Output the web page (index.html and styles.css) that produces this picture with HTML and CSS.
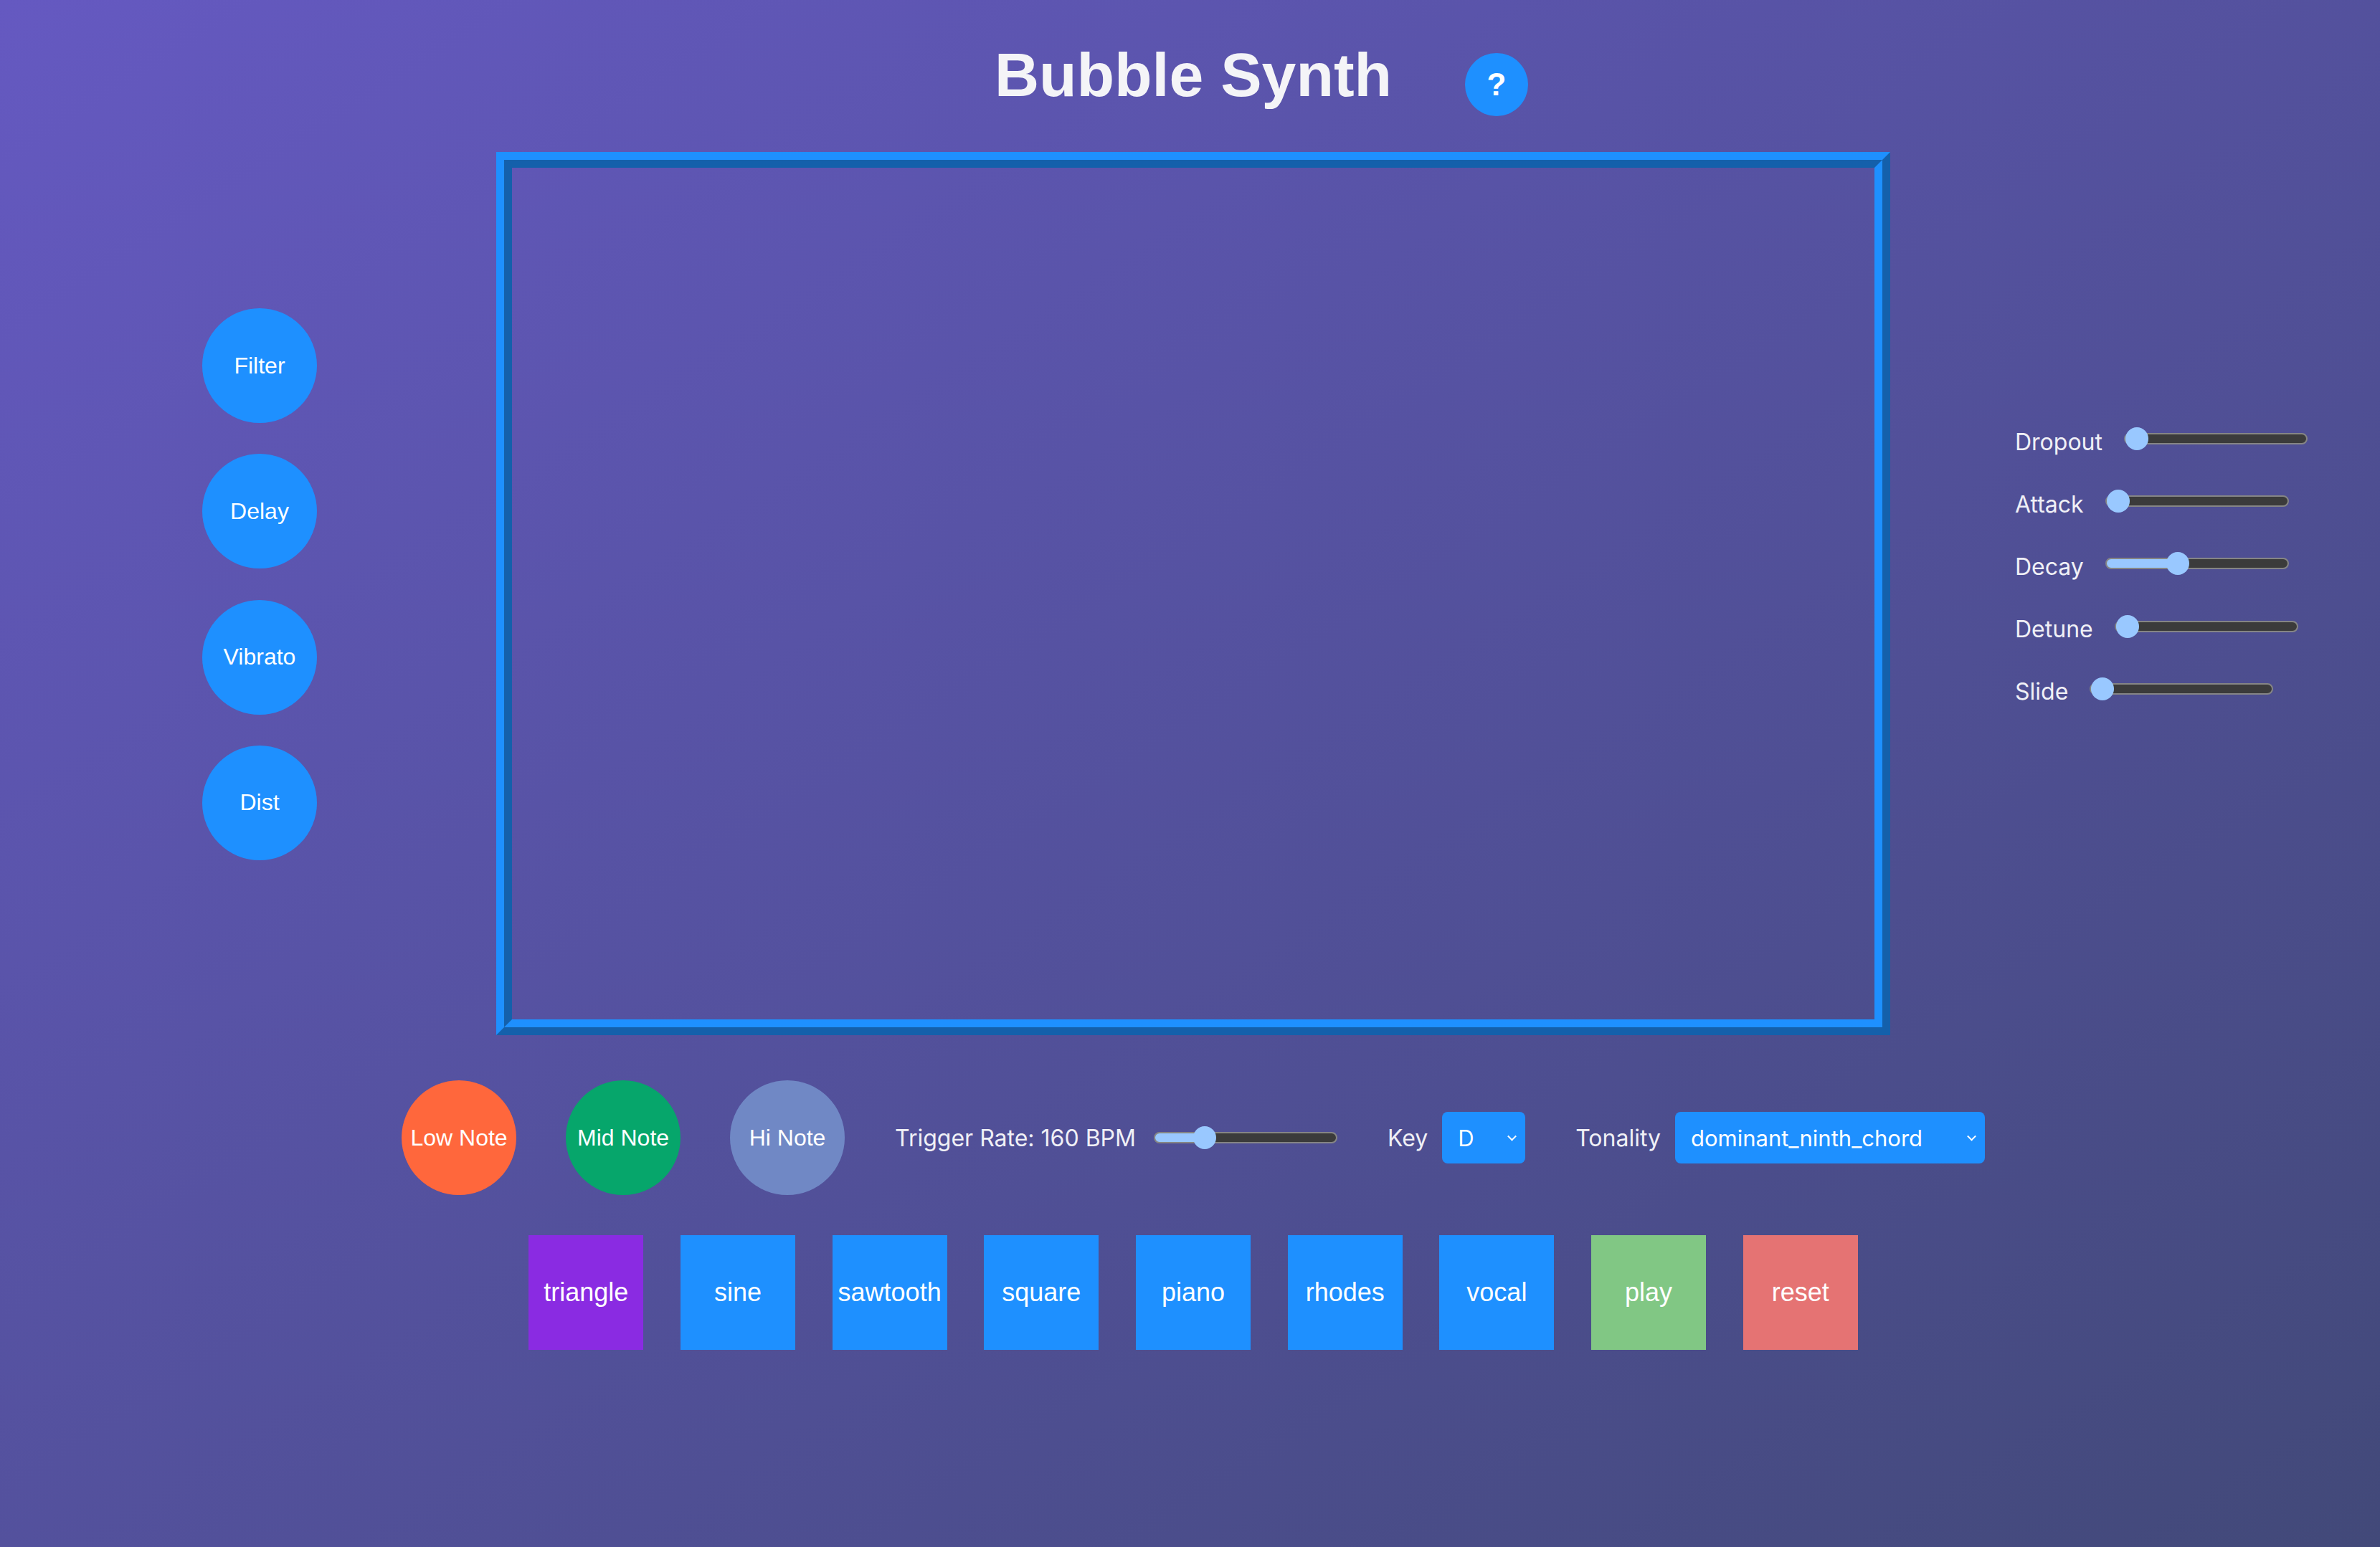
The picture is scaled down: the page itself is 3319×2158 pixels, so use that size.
FILE: index.html
```html
<!DOCTYPE html>
<html lang="en">
<head>
<meta charset="utf-8">
<title>Bubble Synth</title>
<link rel="stylesheet" href="styles.css">
</head>
<body>
<div class="app">
  <header class="header">
    <h1 class="title">Bubble Synth</h1>
    <button class="help" type="button">?</button>
  </header>

  <main class="stage">
    <div class="effects">
      <button class="fx" type="button">Filter</button>
      <button class="fx" type="button">Delay</button>
      <button class="fx" type="button">Vibrato</button>
      <button class="fx" type="button">Dist</button>
    </div>

    <canvas class="board" width="1900" height="1188"></canvas>

    <div class="params">
      <div class="param"><label class="plabel">Dropout</label><input class="rng" type="range" min="0" max="100" value="0" style="--p:16px"></div>
      <div class="param"><label class="plabel">Attack</label><input class="rng" type="range" min="0" max="100" value="0" style="--p:16px"></div>
      <div class="param"><label class="plabel">Decay</label><input class="rng" type="range" min="0" max="100" value="38" style="--p:99px"></div>
      <div class="param"><label class="plabel">Detune</label><input class="rng" type="range" min="0" max="100" value="0" style="--p:16px"></div>
      <div class="param"><label class="plabel">Slide</label><input class="rng" type="range" min="0" max="100" value="0" style="--p:16px"></div>
    </div>
  </main>

  <section class="controls">
    <div class="notes">
      <button class="note low" type="button">Low Note</button>
      <button class="note mid" type="button">Mid Note</button>
      <button class="note hi" type="button">Hi Note</button>
    </div>
    <div class="rate">
      <span class="clabel">Trigger Rate: 160 BPM</span>
      <input class="rng" type="range" min="0" max="100" value="24" style="--p:68px">
    </div>
    <div class="field">
      <span class="clabel">Key</span>
      <div class="sel key"><select><option>D</option></select></div>
    </div>
    <div class="field">
      <span class="clabel">Tonality</span>
      <div class="sel ton"><select><option>dominant_ninth_chord</option></select></div>
    </div>
  </section>

  <section class="waves">
    <button class="wave active" type="button">triangle</button>
    <button class="wave" type="button">sine</button>
    <button class="wave" type="button">sawtooth</button>
    <button class="wave" type="button">square</button>
    <button class="wave" type="button">piano</button>
    <button class="wave" type="button">rhodes</button>
    <button class="wave" type="button">vocal</button>
    <button class="wave play" type="button">play</button>
    <button class="wave reset" type="button">reset</button>
  </section>
</div>
</body>
</html>
```

FILE: styles.css
```css
html, body {
  margin: 0;
  padding: 0;
  height: 100%;
}

body {
  min-height: 100vh;
  background: linear-gradient(to bottom right, #6559c1, #424979);
  font-family: "Liberation Sans", Arial, sans-serif;
  color: #f2f2f7;
  overflow: hidden;
}

.app {
  padding-left: 9px;
}

/* ---------- header ---------- */
.header {
  display: grid;
  grid-template-columns: 1fr 560px 1fr;
  align-items: start;
  padding-top: 55px;
}

.title {
  grid-column: 2;
  margin: 0;
  text-align: center;
  font-family: "Liberation Sans", Arial, sans-serif;
  font-weight: 700;
  font-size: 86px;
  line-height: 99px;
  color: #f4f4f7;
}

.help {
  grid-column: 3;
  justify-self: start;
  margin: 19px 0 0 99px;
  width: 88px;
  height: 88px;
  border: 0;
  border-radius: 50%;
  background: #1e90ff;
  color: #fff;
  font-family: "Liberation Sans", Arial, sans-serif;
  font-weight: 700;
  font-size: 44px;
  padding: 0;
  display: flex;
  align-items: center;
  justify-content: center;
}

/* ---------- main stage ---------- */
.stage {
  display: grid;
  grid-template-columns: 1fr auto 1fr;
  margin-top: 50px;
}

.effects {
  justify-self: start;
  align-self: start;
  margin: 218px 0 0 273px;
  display: flex;
  flex-direction: column;
  gap: 43.3px;
}

.fx {
  width: 160px;
  height: 160px;
  border: 0;
  border-radius: 50%;
  background: #1e90ff;
  color: #fff;
  font-family: "Liberation Sans", Arial, sans-serif;
  font-size: 32px;
  padding: 0;
}

.board {
  display: block;
  width: 1900px;
  height: 1188px;
  border: 22px ridge #1e90ff;
  background: transparent;
}

.params {
  justify-self: start;
  align-self: start;
  margin: 384px 0 0 174px;
  display: flex;
  flex-direction: column;
  gap: 47.2px;
}

.param {
  display: flex;
  align-items: center;
  height: 40px;
}

.plabel {
  font-family: Inter, "Noto Sans", sans-serif;
  font-size: 32px;
  color: #f0f0f6;
  margin-right: 30px;
}

/* ---------- range inputs ---------- */
.rng {
  -webkit-appearance: none;
  appearance: none;
  display: block;
  width: 256px;
  height: 32px;
  margin: 0 0 8px 0;
  padding: 0;
  background: transparent;
}

.rng::-webkit-slider-runnable-track {
  height: 16px;
  box-sizing: border-box;
  border: 2px solid #858585;
  border-radius: 8px;
  background: linear-gradient(to right, #99c8ff var(--p), #3b3b3b var(--p));
}

.rng::-webkit-slider-thumb {
  -webkit-appearance: none;
  appearance: none;
  width: 32px;
  height: 32px;
  border: 0;
  border-radius: 50%;
  background: #99c8ff;
  margin-top: -10px;
}

/* ---------- controls row ---------- */
.controls {
  display: flex;
  justify-content: center;
  align-items: center;
  gap: 70px;
  margin-top: 63px;
}

.notes {
  display: flex;
  gap: 69px;
}

.note {
  width: 160px;
  height: 160px;
  border: 0;
  border-radius: 50%;
  color: #fff;
  font-family: "Liberation Sans", Arial, sans-serif;
  font-size: 32px;
  padding: 0;
}

.note.low { background: #ff673c; }
.note.mid { background: #06a66b; }
.note.hi  { background: #7088c5; }

.rate {
  display: flex;
  align-items: center;
  gap: 25px;
}

.rate .rng {
  margin: 0;
}

.field {
  display: flex;
  align-items: center;
  gap: 20px;
}

.clabel {
  font-family: Inter, "Noto Sans", sans-serif;
  font-size: 32px;
  color: #f0f0f6;
}

.sel {
  position: relative;
}

.sel select {
  -webkit-appearance: none;
  appearance: none;
  display: block;
  height: 72px;
  border: 0;
  border-radius: 8px;
  background: #1e90ff;
  color: #fff;
  font-family: Inter, "Noto Sans", sans-serif;
  font-size: 31px;
  padding: 0 0 0 22px;
  outline: none;
}

.sel.key select { width: 116px; }
.sel.ton select { width: 432px; }

.sel::after {
  content: "";
  position: absolute;
  right: 14px;
  top: 50%;
  width: 7px;
  height: 7px;
  border-right: 2px solid #fff;
  border-bottom: 2px solid #fff;
  transform: translateY(-70%) rotate(45deg);
  pointer-events: none;
}

/* ---------- waveform buttons ---------- */
.waves {
  display: flex;
  justify-content: center;
  gap: 51.7px;
  margin-top: 56px;
}

.wave {
  width: 160px;
  height: 160px;
  border: 0;
  border-radius: 0;
  background: #1e90ff;
  color: #fff;
  font-family: "Liberation Sans", Arial, sans-serif;
  font-size: 36px;
  padding: 0;
}

.wave.active { background: #8a2be2; }
.wave.play   { background: #81c784; }
.wave.reset  { background: #e57373; }
```
